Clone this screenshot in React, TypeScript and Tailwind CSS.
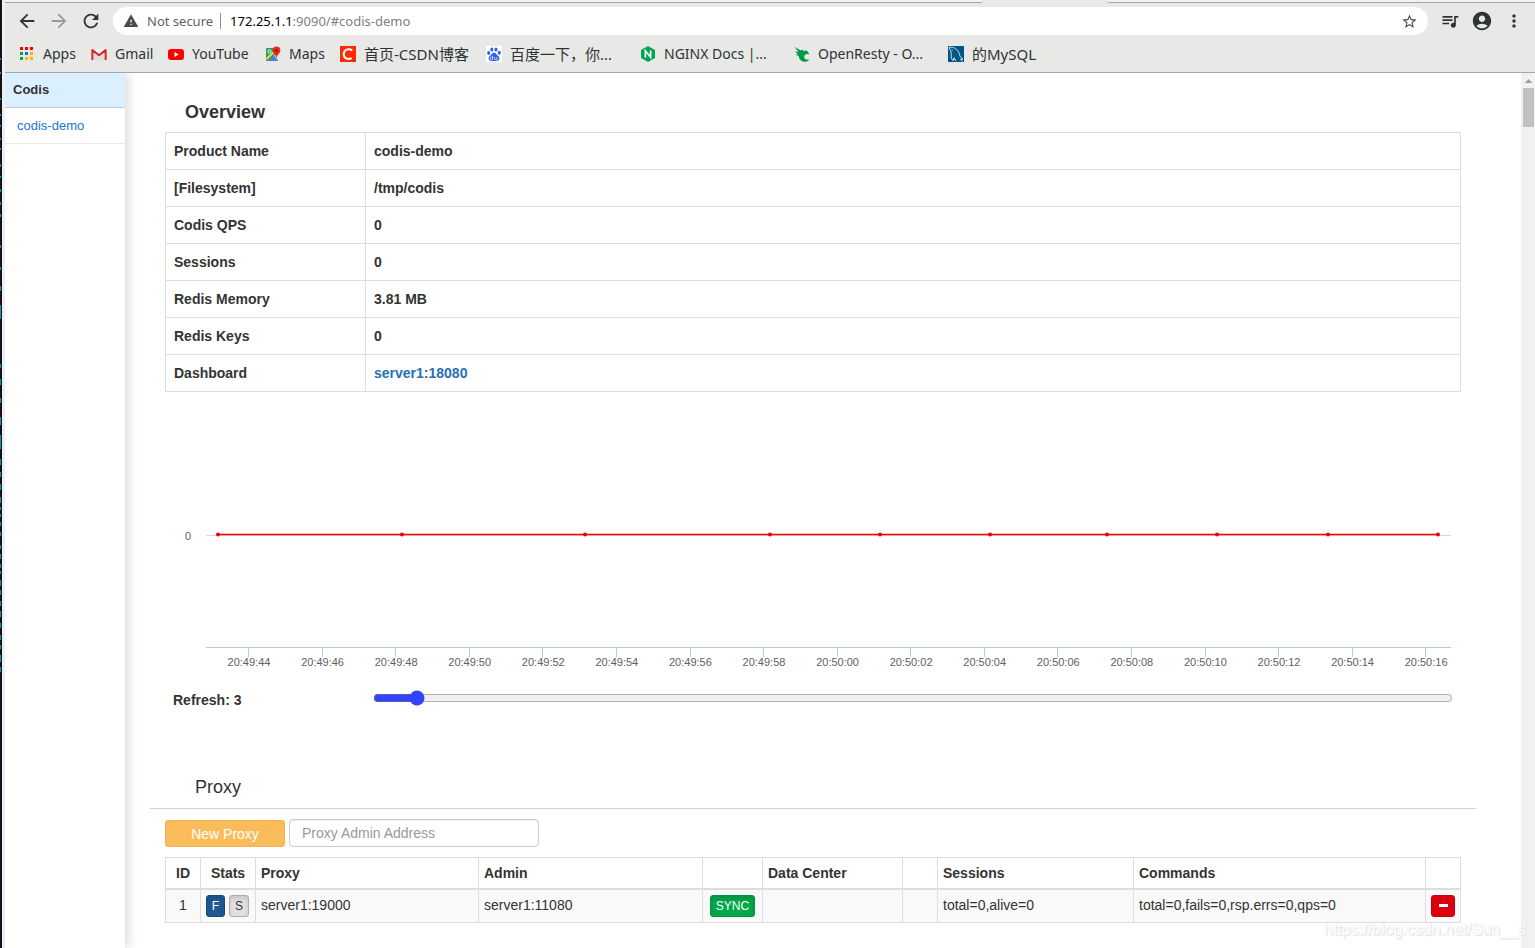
import { useState } from 'react';
import type { ReactNode } from 'react';
import {
  MdAccountCircle,
  MdArrowBack,
  MdArrowForward,
  MdMoreVert,
  MdQueueMusic,
  MdRefresh,
  MdStarBorder,
  MdWarning,
} from 'react-icons/md';

const AppsIcon = () => (
  <svg width="14" height="14" viewBox="0 0 14 14" aria-hidden="true">
    {['#f00', '#f00', '#f00', '#00a651', '#1a73e8', '#fbb400', '#00a651', '#fbb400', '#fbb400'].map((c, i) => (
      <rect key={i} x={(i % 3) * 5} y={Math.floor(i / 3) * 5} width="3" height="3" fill={c} />
    ))}
  </svg>
);

const GmailIcon = () => (
  <svg width="16" height="16" viewBox="0 0 16 16" aria-hidden="true">
    <rect x="1" y="3" width="14" height="11" fill="#f4f4f4" />
    <path d="M3 14V6l5 4 5-4v8z" fill="#dedede" />
    <path d="M1.4 14V4l6.600 5.300L14.600 4v10" fill="none" stroke="#e02020" strokeWidth="2" strokeLinejoin="round" />
  </svg>
);

const YouTubeIcon = () => (
  <svg width="16" height="16" viewBox="0 0 16 16" aria-hidden="true">
    <rect x="0" y="3" width="16" height="11" rx="3" fill="#f00" />
    <path d="M6.500 6v5L10.600 8.500z" fill="#fff" />
  </svg>
);

const MapsIcon = () => (
  <svg width="16" height="16" viewBox="0 0 16 16" aria-hidden="true">
    <rect x="1" y="2" width="13" height="13" rx="1" fill="#1fa463" />
    <path d="M1 12L10.500 3l1.500 1.500L2 14z" fill="#fbd03c" />
    <path d="M9 9.500l4.500 5.500h.5V7l-2-1z" fill="#e3e3e3" />
    <path d="M3 15l5-5.500 5 5.500z" fill="#4a7df0" />
    <circle cx="4.500" cy="5.500" r="1.600" fill="none" stroke="#fff" />
    <path d="M11.500.5a3.900 3.900 0 0 1 3.900 3.900c0 2.900-3 3.500-3.900 7.600-.9-4.100-3.900-4.700-3.900-7.600A3.900 3.900 0 0 1 11.500.5z" fill="#e8281e" />
    <circle cx="11.500" cy="4.500" r="1.300" fill="#8c1310" />
  </svg>
);

const CsdnIcon = () => (
  <svg width="16" height="16" viewBox="0 0 16 16" aria-hidden="true">
    <rect width="16" height="16" fill="#ff2a00" />
    <path d="M12.300 4.300C9 2.400 3.800 3 3.700 8.200c0 4.800 4.700 5.500 8 3.900" fill="none" stroke="#fff" strokeWidth="2" />
  </svg>
);

const BaiduIcon = () => (
  <svg width="16" height="16" viewBox="0 0 16 16" aria-hidden="true">
    <rect width="16" height="16" fill="#fff" />
    <g fill="#2b5cf0">
      <ellipse cx="2.700" cy="7" rx="1.500" ry="2" />
      <ellipse cx="5.900" cy="3.500" rx="1.500" ry="2.100" />
      <ellipse cx="10" cy="3.500" rx="1.500" ry="2.100" />
      <ellipse cx="13.300" cy="6.800" rx="1.500" ry="2" />
      <path d="M8 6.800c1.800 0 2.400 1.700 3.700 2.800 1.600 1.300 2.200 2.500 1.500 4-.8 1.800-3.100 1.500-5.200 1.500s-4.400.3-5.200-1.500c-.7-1.500 0-2.700 1.500-4C5.600 8.500 6.200 6.800 8 6.800z" />
    </g>
    <path d="M6.700 9.600v4H5.300a1.100 1.100 0 0 1 0-2.400h1.400M8.700 11v2c0 .5.300.7.800.7H11V11" fill="none" stroke="#fff" strokeWidth=".7" />
  </svg>
);

const NginxIcon = () => (
  <svg width="16" height="16" viewBox="0 0 16 16" aria-hidden="true">
    <path d="M8 0l7 4v8l-7 4-7-4V4z" fill="#00a650" />
    <path d="M5.400 11.500V4.800L10.600 11.200V4.500" fill="none" stroke="#fff" strokeWidth="1.700" />
  </svg>
);

const OpenRestyIcon = () => (
  <svg width="16" height="16" viewBox="0 0 16 16" aria-hidden="true">
    <path
      d="M.3.800L6.800 4.400 8.500 3.600 9.400 5.300C11 4 13 4.300 14.300 6.300L15.200 8.600 13.500 8C11 8.200 10 9.500 10.300 11.400c.4 1.900 2.600 2.600 5 2-1.600 2.500-5.400 3.200-8 1.400-1.700-1.300-2.500-3-2.400-4.600L1.500 8.600l2.700-.4L.6 5.400l3.900.6z"
      fill="#009a49"
    />
  </svg>
);

const MysqlIcon = () => (
  <svg width="16" height="16" viewBox="0 0 16 16" aria-hidden="true">
    <rect width="16" height="16" fill="#005686" />
    <path
      d="M1 1.500c3-1 6.500.5 8.700 3.300 1.600 2.100 2 4.500 2.600 5.900l2.700 2.300-2.500.2 2 2.300M1 1.500c.4 1.500 1.600 2.700 2 4.300.6 2-.3 4.500.5 6.800l1.700 2.100.8-3 2 3.500M3.600 3.500l1 .8"
      fill="none"
      stroke="#e8f1f6"
      strokeWidth=".9"
    />
  </svg>
);

type Bookmark = { label: string; icon: ReactNode; style: string };

const bookmarks: Bookmark[] = [
  { label: 'Apps', icon: <AppsIcon />, style: 'w-[71px] gap-[9px] text-sm' },
  { label: 'Gmail', icon: <GmailIcon />, style: 'w-[77px] gap-2 text-sm' },
  { label: 'YouTube', icon: <YouTubeIcon />, style: 'w-[97px] gap-2 text-sm' },
  { label: 'Maps', icon: <MapsIcon />, style: 'w-[75px] gap-2 text-sm' },
  { label: '首页-CSDN博客', icon: <CsdnIcon />, style: 'w-[146px] gap-2 text-[15px]' },
  { label: '百度一下，你...', icon: <BaiduIcon />, style: 'w-[154px] gap-2 text-[15px]' },
  { label: 'NGINX Docs |...', icon: <NginxIcon />, style: 'w-[154px] gap-2 text-sm' },
  { label: 'OpenResty - O...', icon: <OpenRestyIcon />, style: 'w-[154px] gap-2 text-sm' },
  { label: '的MySQL', icon: <MysqlIcon />, style: 'w-[100px] gap-2 text-[15px]' },
];

const overview: [string, ReactNode][] = [
  ['Product Name', 'codis-demo'],
  ['[Filesystem]', '/tmp/codis'],
  ['Codis QPS', '0'],
  ['Sessions', '0'],
  ['Redis Memory', '3.81 MB'],
  ['Redis Keys', '0'],
  ['Dashboard', <a key="d" href="#dashboard" className="text-[#286fb4]">server1:18080</a>],
];

const tickLabels = [
  '20:49:44', '20:49:46', '20:49:48', '20:49:50', '20:49:52', '20:49:54', '20:49:56', '20:49:58', '20:50:00',
  '20:50:02', '20:50:04', '20:50:06', '20:50:08', '20:50:10', '20:50:12', '20:50:14', '20:50:16',
];

const samples = [53, 237, 420, 605, 715, 825, 942, 1052, 1163, 1273];

const edgeMarks = [
  [58, 2], [72, 2], [98, 2], [114, 2], [125, 2], [138, 2], [148, 2], [164, 3], [176, 2], [189, 3], [202, 3], [214, 3],
  [245, 3], [267, 3], [286, 5], [305, 14], [364, 4], [379, 6], [398, 5], [417, 8], [435, 14], [459, 6], [472, 5],
  [484, 6], [497, 6], [507, 3], [514, 3], [522, 4], [532, 4], [545, 4], [554, 5], [564, 4], [571, 3], [580, 6],
  [590, 5], [601, 5], [611, 6], [623, 5], [635, 5], [645, 4], [655, 7], [667, 5],
];

function DesktopEdge() {
  return (
    <div className="relative w-[5px] shrink-0 self-stretch border-r-[3px] border-[#f0eef0] bg-[#10141a]">
      <svg className="absolute top-0 left-0" width="1" height="700" aria-hidden="true">
        {edgeMarks.map(([y, h]) => (
          <rect key={y} x="0" y={y} width="1" height={h} fill="#0e9aa0" />
        ))}
      </svg>
    </div>
  );
}

function BrowserBar() {
  return (
    <header className="border-b border-[#a5a5a4] bg-[#e8e8e7] font-['Noto_Sans','Noto_Sans_CJK_SC',sans-serif]">
      <div className="flex h-[3px] justify-between">
        <div className="w-[978px] rounded-br-md border-b border-[#a5a5a4] bg-[#f2f2f1]" />
        <div className="w-[428px] rounded-bl-md border-b border-[#a5a5a4] bg-[#f2f2f1]" />
      </div>
      <div className="flex h-9 items-center pr-[5px] pl-[6px] text-[#2e3436]">
        <button aria-label="Back" className="flex w-8 justify-center"><MdArrowBack size={22} /></button>
        <button aria-label="Forward" className="flex w-8 justify-center text-[#9a9c9b]"><MdArrowForward size={22} /></button>
        <button aria-label="Reload" className="flex w-8 justify-center"><MdRefresh size={22} /></button>
        <div className="ml-[6px] flex h-7 min-w-0 flex-1 items-center rounded-full bg-white px-[10px] text-[13px]">
          <MdWarning size={16} className="text-[#4a4d4f]" />
          <span className="ml-2 pt-0.5 text-[#5f6163]">Not secure</span>
          <span className="mr-[9px] ml-[7px] h-4 w-px bg-[#8e8e8e]" />
          <span className="flex-1 pt-0.5 text-[#808080]"><span className="text-black">172.25.1.1</span>:9090/#codis-demo</span>
          <button aria-label="Bookmark this page"><MdStarBorder size={17} className="text-[#4a4d4f]" /></button>
        </div>
        <button aria-label="Media controls" className="ml-[6px] flex w-8 justify-center"><MdQueueMusic size={20} /></button>
        <button aria-label="Profile" className="flex w-8 justify-center"><MdAccountCircle size={22} /></button>
        <button aria-label="Menu" className="flex w-8 justify-center"><MdMoreVert size={20} /></button>
      </div>
      <nav aria-label="Bookmarks" className="flex h-[33px] items-center overflow-hidden pb-[3px] pl-[15px] leading-5 text-[#2e3436]">
        {bookmarks.map((b) => (
          <a key={b.label} href="#bookmark" className={`flex shrink-0 items-center leading-5 whitespace-nowrap ${b.style}`}>
            <span className="shrink-0">{b.icon}</span>
            {b.label}
          </a>
        ))}
      </nav>
    </header>
  );
}

function Chart() {
  return (
    <svg viewBox="0 0 1296 285" className="block h-auto w-full" role="img" aria-label="Queries per second">
      <path d="M41 143.500H1286" stroke="#d8d8d8" />
      <path d="M41 255.500H1286" stroke="#b9cde0" />
      <text x="26" y="148" textAnchor="end" fontSize="11" fill="#606060">0</text>
      {tickLabels.map((label, i) => {
        const x = 83.600 + i * 73.570;
        return (
          <g key={label}>
            <path d={`M${Math.floor(x) + 0.5} 255v10`} stroke="#b9cde0" />
            <text x={x + 0.4} y="274" textAnchor="middle" fontSize="11" fill="#606060">{label}</text>
          </g>
        );
      })}
      <path d="M53 142.500H1273" stroke="#f00000" strokeWidth="1.600" />
      {samples.map((x) => (
        <circle key={x} cx={x} cy="142.500" r="2" fill="#f00000" />
      ))}
    </svg>
  );
}

const columns: [string, string][] = [
  ['ID', 'w-[35px] text-center'],
  ['Stats', 'w-[55px] text-center'],
  ['Proxy', 'w-[223px] text-left'],
  ['Admin', 'w-[224px] text-left'],
  ['', 'w-[60px]'],
  ['Data Center', 'w-[140px] text-left'],
  ['', 'w-[35px]'],
  ['Sessions', 'w-[196px] text-left'],
  ['Commands', 'w-[292px] text-left'],
  ['', 'w-[35px]'],
];

const cell = 'border border-[#ddd] p-[5px] align-top';
const small = 'inline-flex h-[22px] items-center justify-center rounded-[3px] border text-xs';

function ProxyTable() {
  return (
    <table className="mt-[10px] w-full table-fixed border-collapse">
      <thead>
        <tr className="h-[31px]">
          {columns.map(([name, style], i) => (
            <th key={i} className={`border border-b-2 border-[#ddd] px-[5px] font-bold whitespace-nowrap ${style}`}>{name}</th>
          ))}
        </tr>
      </thead>
      <tbody>
        <tr className="bg-[#f9f9f9]">
          <td className={`${cell} text-center`}>1</td>
          <td className={cell}>
            <div className="flex gap-1">
              <button className={`${small} w-[19px] border-[#1a4774] bg-[#1f5a94] text-white shadow-[inset_0_3px_5px_rgba(0,0,0,0.125)]`}>F</button>
              <button className={`${small} w-5 border-[#adadad] bg-[#e2e2e2] shadow-[inset_0_3px_5px_rgba(0,0,0,0.125)]`}>S</button>
            </div>
          </td>
          <td className={cell}>server1:19000</td>
          <td className={cell}>server1:11080</td>
          <td className={cell}>
            <div className="flex justify-center">
              <button className={`${small} w-[45px] border-[#009440] bg-[#00a84a] text-white shadow-[inset_0_3px_5px_rgba(0,0,0,0.125)]`}>SYNC</button>
            </div>
          </td>
          <td className={cell} />
          <td className={cell} />
          <td className={cell}>total=0,alive=0</td>
          <td className={cell}>total=0,fails=0,rsp.errs=0,qps=0</td>
          <td className={cell}>
            <div className="flex">
              <button aria-label="Remove proxy" className={`${small} w-6 border-[#c4000e] bg-[#dc000f]`}>
                <span className="h-[3px] w-[9px] bg-white" />
              </button>
            </div>
          </td>
        </tr>
      </tbody>
    </table>
  );
}

export default function App() {
  const [refresh, setRefresh] = useState(3);
  return (
    <div className="relative flex min-h-screen bg-white">
      <DesktopEdge />
      <div className="flex min-w-0 flex-1 flex-col">
        <BrowserBar />
        <div className="flex flex-1 overflow-hidden font-['Liberation_Sans',Arial,sans-serif] text-sm leading-5 text-[#333]">
          <aside className="w-[120px] shrink-0 text-[13px] shadow-[3px_0_10px_rgba(0,0,0,0.15)]">
            <h2 className="flex h-[35px] items-center border-b border-[#c4ccd2] bg-[#dbf0ff] px-2 font-bold">Codis</h2>
            <a href="#codis-demo" className="flex h-9 items-center border-b border-[#e8e8e8] px-3 text-[#1a76d6]">codis-demo</a>
          </aside>
          <main className="min-w-0 flex-1 pr-[45px] pl-[25px]">
            <section className="px-[15px] pt-[29px]">
              <h1 className="px-5 text-lg leading-5 font-bold">Overview</h1>
              <table className="mt-[10px] w-full border-collapse text-left font-bold">
                <tbody>
                  {overview.map(([name, value]) => (
                    <tr key={name} className="h-[37px]">
                      <th scope="row" className="w-[200px] border border-[#ddd] px-2">{name}</th>
                      <td className="border border-[#ddd] px-2">{value}</td>
                    </tr>
                  ))}
                </tbody>
              </table>
              <Chart />
              <div className="mt-[9px] flex items-center px-2 font-bold">
                <label htmlFor="refresh" className="w-[200px] shrink-0 pt-1">Refresh: {refresh}</label>
                <input
                  id="refresh"
                  type="range"
                  min={1}
                  max={60}
                  value={refresh}
                  onChange={(e) => setRefresh(Number(e.target.value))}
                  className="h-4 min-w-0 flex-1 accent-[#3344ff]"
                />
              </div>
            </section>
            <section className="mt-[67px]">
              <h2 className="border-b border-[#d3d3d3] px-[45px] pb-[11px] text-lg leading-5">Proxy</h2>
              <div className="px-[15px] pt-[10px]">
                <form className="flex items-end gap-1" onSubmit={(e) => e.preventDefault()}>
                  <button className="h-[27px] w-[120px] rounded-[3px] border border-[#f2b055] bg-[#fabc5a] text-white">New Proxy</button>
                  <input
                    aria-label="Proxy Admin Address"
                    placeholder="Proxy Admin Address"
                    className="h-7 w-[250px] rounded border border-[#ccc] px-3 shadow-[inset_0_1px_1px_rgba(0,0,0,0.075)] placeholder:text-[#999]"
                  />
                </form>
                <ProxyTable />
              </div>
            </section>
          </main>
          <div className="flex w-[14px] shrink-0 flex-col items-center bg-[#f1f1f1]" aria-hidden="true">
            <svg width="14" height="15" viewBox="0 0 14 15"><path d="M3.500 10L7.500 6l4 4z" fill="#a0a0a0" /></svg>
            <div className="ml-px h-[39px] w-[11px] bg-[#c1c1c1]" />
          </div>
        </div>
      </div>
      <p className="pointer-events-none absolute right-[9px] bottom-2 font-['Liberation_Sans',Arial,sans-serif] text-base leading-5 text-white [text-shadow:1px_1px_1px_#ddd,0_0_1px_#ddd]">
        https://blog.csdn.net/Sun__s
      </p>
    </div>
  );
}
